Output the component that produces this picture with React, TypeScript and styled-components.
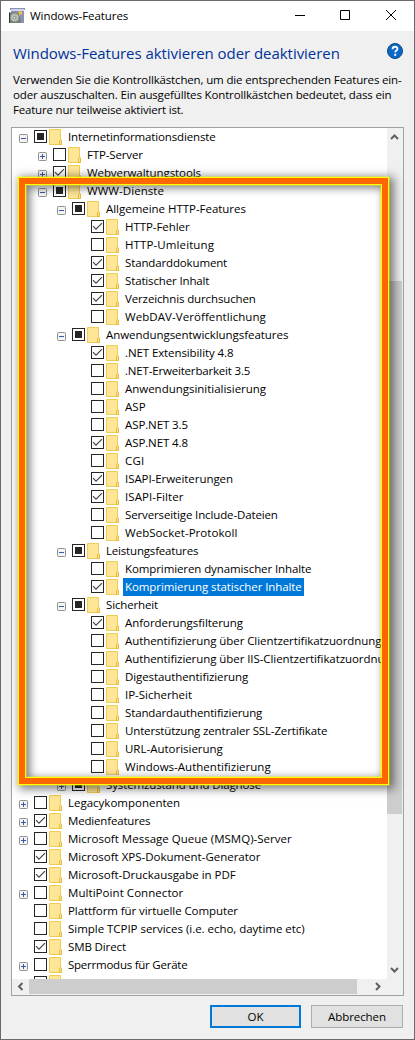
import React from 'react';
import styled, { createGlobalStyle, css } from 'styled-components';

const Global = createGlobalStyle`
  * { box-sizing: border-box; }
  html, body { margin: 0; padding: 0; background: #f0f0f0; overflow: hidden; }
  body { font-family: "Open Sans", "Noto Sans", sans-serif; font-size: 11.5px; color: #000; }
`;

const Window = styled.main`
  position: relative;
  display: flex;
  flex-direction: column;
  width: 415px;
  height: 1040px;
  background: #f0f0f0;
  border: 1px solid #6b696b;
`;

const TitleBar = styled.header`
  display: flex;
  align-items: center;
  height: 30px;
  padding-left: 8px;
  background: #fff;
`;

const WindowTitle = styled.span`
  margin-left: 5px;
  flex: 1;
  line-height: 30px;
  white-space: nowrap;
  letter-spacing: -0.06px;
`;

const Caption = styled.div`
  display: flex;
  width: 138px;
  height: 30px;
  svg { width: 46px; height: 30px; display: block; }
`;

const Intro = styled.section`
  height: 96px;
  padding: 12px 12px 0 12px;
`;

const HeadingRow = styled.div`
  display: flex;
  justify-content: space-between;
  height: 20px;
`;

const Heading = styled.h1`
  margin: 0;
  font-size: 15px;
  font-weight: 400;
  line-height: 20px;
  letter-spacing: -0.05px;
  color: #003399;
  white-space: nowrap;
`;

const HelpIcon = styled.svg`
  width: 16px;
  height: 16px;
  margin-right: -1px;
`;

const Description = styled.p`
  margin: 9px 0 0;
  line-height: 15px;
`;

const Line = styled.span<{ $s?: number }>`
  display: block;
  white-space: nowrap;
  letter-spacing: ${(p) => p.$s ?? 0}px;
`;

const ListBox = styled.section`
  display: grid;
  grid-template-columns: 375px 16px;
  grid-template-rows: 851px 16px;
  width: 393px;
  height: 869px;
  margin-left: 10px;
  border: 1px solid #a0a0a0;
  background: #f0f0f0;
`;

const Tree = styled.ul`
  list-style: none;
  margin: 0;
  padding: 0;
  overflow: hidden;
  background: #fff;
`;

const Item = styled.li<{ $level: number }>`
  display: flex;
  height: 18px;
  padding-left: ${(p) => 7 + p.$level * 19}px;
`;

const Expander = styled.svg`
  flex: none;
  width: 9px;
  height: 9px;
  margin: 6px 6px 0 0;
`;

const NoExpander = styled.span`
  flex: none;
  width: 15px;
`;

const Box = styled.svg`
  flex: none;
  width: 13px;
  height: 13px;
  margin: 2px 2px 0 0;
`;

const Folder = styled.svg`
  flex: none;
  width: 13px;
  height: 16px;
  margin: 1px 4px 0 0;
`;

const Label = styled.span<{ $selected?: boolean; $s: number }>`
  flex: none;
  height: 18px;
  padding: 0 2px;
  line-height: 18px;
  white-space: pre;
  letter-spacing: ${(p) => p.$s}px;
  ${(p) => p.$selected && css`background: #0078d7; color: #fff;`}
`;

const VBar = styled.div`
  display: grid;
  grid-template-rows: 153px 533px 1fr;
  width: 15px;
`;

const HBar = styled.div`
  display: grid;
  grid-template-columns: 17px 328px 1fr;
  height: 15px;
`;

const Thumb = styled.div`
  background: #cdcdcd;
`;

const Arrow = styled.svg`
  width: 15px;
  height: 15px;
  display: block;
`;

const HArrowSlot = styled.div`
  display: flex;
  justify-content: flex-end;
  padding-right: 3px;
  margin-right: -2px;
`;

const VArrowSlot = styled.div`
  display: flex;
  align-items: flex-end;
  padding-bottom: 1px;
`;

const Buttons = styled.footer`
  display: flex;
  gap: 10px;
  margin: 9px 0 0 209px;
`;

const Button = styled.button<{ $primary?: boolean; $w: number }>`
  width: ${(p) => p.$w}px;
  height: 23px;
  padding: 0;
  font: inherit;
  line-height: 19px;
  letter-spacing: -0.08px;
  color: #000;
  background: #e1e1e1;
  border: ${(p) => (p.$primary ? '2px solid #0078d7' : '1px solid #adadad')};
`;

const Highlight = styled.div`
  position: absolute;
  left: 17px;
  top: 176px;
  width: 371px;
  height: 608px;
  border: 1px solid #ffff00;
  box-shadow: 0 0 0 1px rgba(255, 255, 0, 0.3), 3px 2px 9px 2px rgba(0, 0, 0, 0.5);
  pointer-events: none;
  &::before {
    content: '';
    position: absolute;
    inset: 0;
    border: 6px solid #ff6600;
  }
  &::after {
    content: '';
    position: absolute;
    inset: 6px;
    border: 1px solid #ffff00;
    box-shadow: inset 0 0 0 1px rgba(255, 255, 0, 0.3), inset 3px 2px 9px 1px rgba(0, 0, 0, 0.5);
  }
`;

type State = 'on' | 'off' | 'mixed';
type Node = { level: number; exp?: '+' | '-'; state: State; text: string; spacing: number; selected?: boolean };

const n = (level: number, exp: '' | '+' | '-', state: State, text: string, tighten: number, selected = false): Node => ({
  level, exp: exp || undefined, state, text, spacing: 0.26 - tighten, selected,
});

/* The fifth value is how much each label is tightened, in px per letter. */
const nodes: Node[] = [
  n(0, '-', 'mixed', 'Internetinformationsdienste', 0.41),
  n(1, '+', 'off', 'FTP-Server', 0.4),
  n(1, '+', 'on', 'Webverwaltungstools', 0.34),
  n(1, '-', 'mixed', 'WWW-Dienste', 0.2),
  n(2, '-', 'mixed', 'Allgemeine HTTP-Features', 0.29),
  n(3, '', 'on', 'HTTP-Fehler', 0.32),
  n(3, '', 'off', 'HTTP-Umleitung', 0.15),
  n(3, '', 'on', 'Standarddokument', 0.4),
  n(3, '', 'on', 'Statischer Inhalt', 0.4),
  n(3, '', 'on', 'Verzeichnis durchsuchen', 0.39),
  n(3, '', 'off', 'WebDAV-Veröffentlichung', 0.19),
  n(2, '-', 'mixed', 'Anwendungsentwicklungsfeatures', 0.31),
  n(3, '', 'on', '.NET Extensibility 4.8', 0.36),
  n(3, '', 'off', '.NET-Erweiterbarkeit 3.5', 0.44),
  n(3, '', 'off', 'Anwendungsinitialisierung', 0.28),
  n(3, '', 'off', 'ASP', 0.2),
  n(3, '', 'off', 'ASP.NET 3.5', 0.36),
  n(3, '', 'on', 'ASP.NET 4.8', 0.36),
  n(3, '', 'off', 'CGI', 0.1),
  n(3, '', 'on', 'ISAPI-Erweiterungen', 0.32),
  n(3, '', 'on', 'ISAPI-Filter', 0.18),
  n(3, '', 'off', 'Serverseitige Include-Dateien', 0.39),
  n(3, '', 'off', 'WebSocket-Protokoll', 0.21),
  n(2, '-', 'mixed', 'Leistungsfeatures', 0.44),
  n(3, '', 'off', 'Komprimieren dynamischer Inhalte', 0.36),
  n(3, '', 'on', 'Komprimierung statischer Inhalte', 0.35, true),
  n(2, '-', 'mixed', 'Sicherheit', 0.4),
  n(3, '', 'on', 'Anforderungsfilterung', 0.31),
  n(3, '', 'off', 'Authentifizierung über Clientzertifikatzuordnung', 0.33),
  n(3, '', 'off', 'Authentifizierung über IIS-Clientzertifikatzuordnung', 0.33),
  n(3, '', 'off', 'Digestauthentifizierung', 0.35),
  n(3, '', 'off', 'IP-Sicherheit', 0.28),
  n(3, '', 'off', 'Standardauthentifizierung', 0.4),
  n(3, '', 'off', 'Unterstützung zentraler SSL-Zertifikate', 0.41),
  n(3, '', 'off', 'URL-Autorisierung', 0.27),
  n(3, '', 'off', 'Windows-Authentifizierung', 0.24),
  n(2, '+', 'mixed', 'Systemzustand und Diagnose', 0.38),
  n(0, '+', 'off', 'Legacykomponenten', 0.26),
  n(0, '+', 'on', 'Medienfeatures', 0.43),
  n(0, '+', 'off', 'Microsoft Message Queue (MSMQ)-Server', 0.25),
  n(0, '', 'on', 'Microsoft XPS-Dokument-Generator', 0.27),
  n(0, '', 'on', 'Microsoft-Druckausgabe in PDF', 0.28),
  n(0, '+', 'off', 'MultiPoint Connector', 0.2),
  n(0, '', 'off', 'Plattform für virtuelle Computer', 0.34),
  n(0, '', 'off', 'Simple TCPIP services (i.e. echo, daytime etc)', 0.29),
  n(0, '', 'on', 'SMB Direct', 0.38),
  n(0, '+', 'off', 'Sperrmodus für Geräte', 0.5),
  n(0, '', 'off', '', 0),
];

function Row({ node }: { node: Node }) {
  return (
    <Item $level={node.level}>
      {node.exp ? (
        <Expander viewBox="0 0 9 9">
          <rect x=".5" y=".5" width="8" height="8" rx=".8" fill="#f4f4f4" stroke="#919191" />
          <path d={node.exp === '+' ? 'M2 4.5h5M4.5 2v5' : 'M2 4.5h5'} stroke="#3a56a5" />
        </Expander>
      ) : (
        <NoExpander />
      )}
      <Box viewBox="0 0 13 13">
        <rect x=".5" y=".5" width="12" height="12" fill="#fff" stroke="#262626" />
        {node.state === 'mixed' && <rect x="3" y="3" width="7" height="7" fill="#262626" />}
        {node.state === 'on' && <path d="M2 6.2 5 9.2 11 3.2" fill="none" stroke="#444" strokeWidth="1.2" />}
      </Box>
      <Folder viewBox="0 0 13 16">
        <path d="M.5.5h11v10l1 .6v4.4H.5z" fill="#ffe596" stroke="#f0cb55" />
        <path d="M10.5 15.5v-3.8l1-1 1 .6v4.2z" fill="#ffe391" stroke="#e5bb3a" />
      </Folder>
      <Label $selected={node.selected} $s={node.spacing}>{node.text}</Label>
    </Item>
  );
}

export default function App() {
  return (
    <>
      <Global />
      <Window>
        <TitleBar>
          <svg width="16" height="16" viewBox="0 0 16 16">
            <path d="M1 0h15v2h-1v13H2V2H1z" fill="#8d92b4" />
            <path d="M2 1h13v2H2z" fill="#cdd5ea" />
            <path d="M9 3.5h4v3h-2V11H9z" fill="#f0c545" />
            <path d="M0 4.5h9.5L12 12v3H0z" fill="#77817c" />
            <path d="M.4 4.5V15" stroke="#222" strokeWidth=".9" />
            <circle cx="5.7" cy="9.5" r="4" fill="#b4bfb2" />
            <circle cx="5.7" cy="9.5" r="1.2" fill="#eef1ee" stroke="#66706a" strokeWidth=".7" />
          </svg>
          <WindowTitle>Windows-Features</WindowTitle>
          <Caption>
            <svg viewBox="0 0 46 30"><path d="M19 14.5h10" stroke="#000" /></svg>
            <svg viewBox="0 0 46 30"><path d="M18.5 9.5h9v9h-9z" fill="none" stroke="#000" /></svg>
            <svg viewBox="0 0 46 30"><path d="m18 9 10 10M28 9 18 19" stroke="#000" /></svg>
          </Caption>
        </TitleBar>
        <Intro>
          <HeadingRow>
            <Heading>Windows-Features aktivieren oder deaktivieren</Heading>
            <HelpIcon viewBox="0 0 16 16">
              <circle cx="8" cy="8" r="7.5" fill="#0a69c8" stroke="#11497f" />
              <path d="M5.6 6.2C5.6 3 10.5 3.1 10.4 6c0 1.6-2.1 1.6-2.2 3.4" fill="none" stroke="#fff" strokeWidth="1.9" />
              <rect x="7.2" y="10.8" width="2" height="2" fill="#fff" />
            </HelpIcon>
          </HeadingRow>
          <Description>
            <Line $s={-0.15}>Verwenden Sie die Kontrollkästchen, um die entsprechenden Features ein-</Line>
            <Line $s={-0.15}>oder auszuschalten. Ein ausgefülltes Kontrollkästchen bedeutet, dass ein</Line>
            <Line $s={-0.19}>Feature nur teilweise aktiviert ist.</Line>
          </Description>
        </Intro>
        <ListBox>
          <Tree>
            {nodes.map((node, i) => <Row key={i} node={node} />)}
          </Tree>
          <VBar>
            <Arrow viewBox="0 0 15 15"><path d="M4 11 7.5 7.5 11 11" fill="none" stroke="#606060" strokeWidth="2" /></Arrow>
            <Thumb />
            <VArrowSlot>
              <Arrow viewBox="0 0 15 15"><path d="M4 5 7.5 8.5 11 5" fill="none" stroke="#606060" strokeWidth="2" /></Arrow>
            </VArrowSlot>
          </VBar>
          <HBar>
            <Arrow viewBox="0 0 15 15"><path d="M10.5 4 7 7.5l3.5 3.5" fill="none" stroke="#606060" strokeWidth="2" /></Arrow>
            <Thumb />
            <HArrowSlot>
              <Arrow viewBox="0 0 15 15"><path d="M5 4l3.5 3.5L5 11" fill="none" stroke="#606060" strokeWidth="2" /></Arrow>
            </HArrowSlot>
          </HBar>
        </ListBox>
        <Buttons>
          <Button $primary $w={91}>OK</Button>
          <Button $w={92}>Abbrechen</Button>
        </Buttons>
        <Highlight />
      </Window>
    </>
  );
}
